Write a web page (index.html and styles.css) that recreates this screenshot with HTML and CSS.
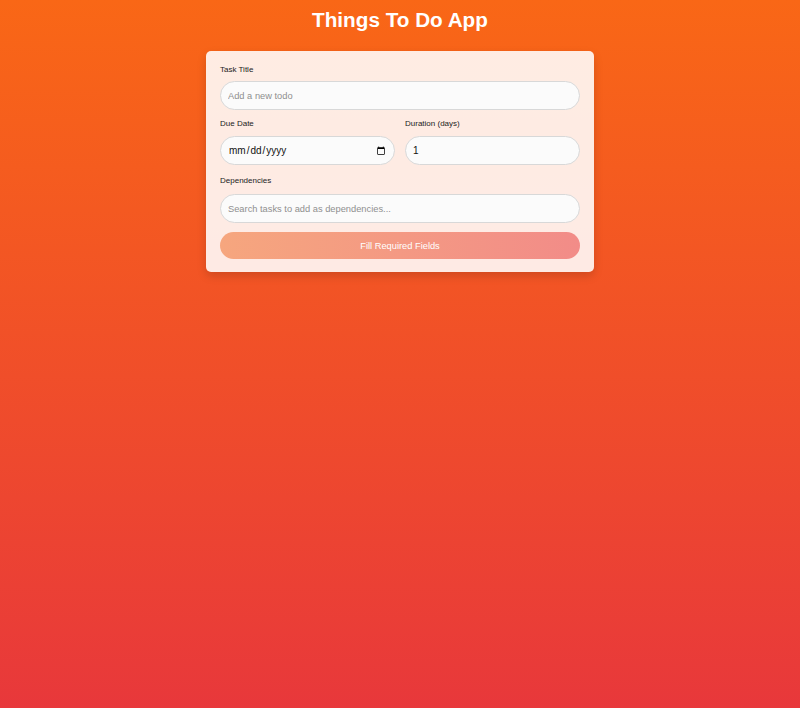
FILE: index.html
```html
<!DOCTYPE html>
<html>
<head>
<meta charset="utf-8">
<link rel="stylesheet" href="styles.css">
</head>
<body>
<main class="page">
  <h1 class="title">Things To Do App</h1>
  <form class="card">
    <div class="field">
      <label class="label">Task Title</label>
      <input class="input" type="text" placeholder="Add a new todo">
    </div>
    <div class="row">
      <div class="field">
        <label class="label">Due Date</label>
        <input class="input date" type="date">
      </div>
      <div class="field">
        <label class="label">Duration (days)</label>
        <input class="input num" type="text" value="1">
      </div>
    </div>
    <div class="field deps">
      <label class="label">Dependencies</label>
      <input class="input" type="text" placeholder="Search tasks to add as dependencies...">
    </div>
    <button class="btn" type="button" disabled>Fill Required Fields</button>
  </form>
</main>
</body>
</html>
```

FILE: styles.css
```css
* { box-sizing: border-box; }
html, body { margin: 0; height: 100%; }
body {
  font-family: "Liberation Sans", Arial, sans-serif;
  background: linear-gradient(180deg, #f96716 0%, #e8383b 100%);
  min-height: 708px;
}
.page {
  display: flex;
  flex-direction: column;
  align-items: center;
  padding-top: 8px;
}
.title {
  margin: 0 0 19px;
  font-size: 20.7px;
  line-height: 24px;
  font-weight: 700;
  color: #fff;
}
.card {
  width: 388px;
  background: rgba(255, 255, 255, 0.88);
  border-radius: 5px;
  padding: 14px 14px 13px;
  box-shadow: 0 4px 10px rgba(0, 0, 0, 0.15);
  display: flex;
  flex-direction: column;
}
.field {
  display: flex;
  flex-direction: column;
  min-width: 0;
}
.label {
  font-size: 8px;
  line-height: 10px;
  color: #222;
  margin-bottom: 6px;
}
.row {
  display: grid;
  grid-template-columns: 1fr 1fr;
  column-gap: 10px;
  margin-top: 9px;
}
.row .label { margin-bottom: 7px; }
.deps { margin-top: 11px; }
.deps .label { margin-bottom: 8px; }
.input {
  height: 29px;
  width: 100%;
  border: 1px solid #d8d8d8;
  border-radius: 15px;
  background: #fbfbfb;
  padding: 0 7px;
  font-family: "Liberation Sans", Arial, sans-serif;
  font-size: 9.3px;
  color: #111;
  outline: none;
}
.input::placeholder { color: #8f8f8f; }
.date { font-size: 10px; padding-right: 6px; }
.num { font-size: 10px; }
.btn {
  margin-top: 9px;
  height: 27px;
  border: none;
  border-radius: 14px;
  background: linear-gradient(90deg, #f6a67e 0%, #f28c88 100%);
  color: #fff;
  font-family: "Liberation Sans", Arial, sans-serif;
  font-size: 9.3px;
  opacity: 1;
}
```
